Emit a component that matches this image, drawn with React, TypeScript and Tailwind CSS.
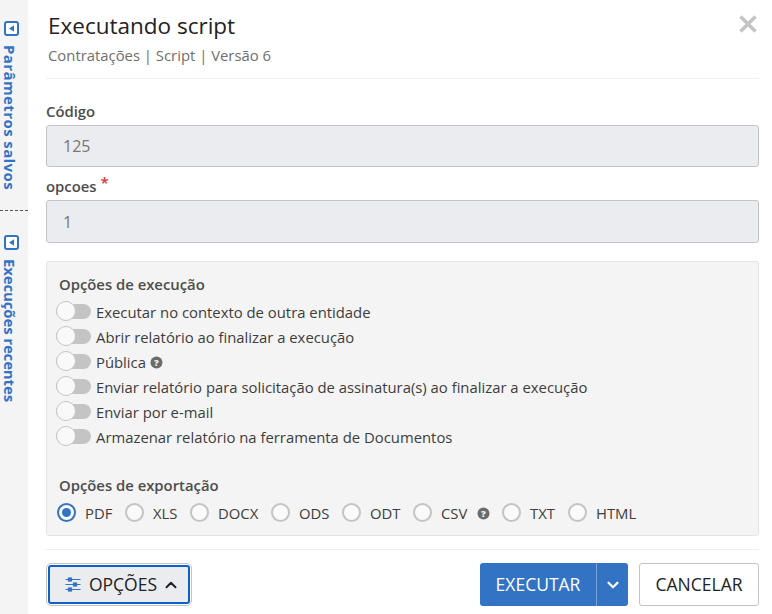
import React from "react";
import { ChevronDown, ChevronUp, X } from "lucide-react";

const SideTab = ({ label, className, tracking }: { label: string; className: string; tracking: string }) => {
  return (
    <div className={`flex flex-col items-start pl-[4px] ${className}`}>
      <svg width="15" height="15" viewBox="0 0 15 15" className="shrink-0">
        <rect x="1" y="1" width="13" height="13" rx="2" fill="#fff" stroke="#3373c4" strokeWidth="2" />
        <path d="M10 4.3v6.4L5 7.5z" fill="#3373c4" />
      </svg>
      <span className={`mt-[9px] ml-[-1px] [writing-mode:vertical-rl] text-[15px] leading-[14px] font-bold text-[#3373c4] whitespace-nowrap ${tracking}`}>
        {label}
      </span>
    </div>
  );
};

const Help = () => (
  <svg width="13" height="13" viewBox="0 0 13 13" className="shrink-0">
    <circle cx="6.5" cy="6.5" r="6" fill="#6b6b6b" />
    <text x="6.5" y="10" textAnchor="middle" fontSize="9.5" fontWeight="800" fill="#f4f4f4" fontFamily="Open Sans, sans-serif">
      ?
    </text>
  </svg>
);

const Toggle = ({ label, help }: { label: string; help?: boolean }) => (
  <div className="flex items-center h-[25px]">
    <div className="relative w-[35px] h-[15px] rounded-full bg-[#c4c4c4] ml-[-3px]">
      <div className="absolute left-0 top-[-3px] w-[20px] h-[20px] rounded-full bg-[#f9f9f9] border border-[#c6c6c6]" />
    </div>
    <span className="ml-[5px] mt-[2px] text-[14.85px] text-[#3d3d3d]">{label}</span>
    {help && (
      <span className="ml-[4px] mt-[2px]">
        <Help />
      </span>
    )}
  </div>
);

const Radio = ({ label, checked, help, width }: { label: string; checked?: boolean; help?: boolean; width: string }) => (
  <div className={`flex items-center ${width}`}>
    <div
      className={`w-[19px] h-[19px] rounded-full flex items-center justify-center shrink-0 bg-[#fafafa] border-2 ${
        checked ? "border-[#3373c4]" : "border-[#c4c4c4]"
      }`}
    >
      {checked && <div className="w-[9px] h-[9px] rounded-full bg-[#3373c4]" />}
    </div>
    <span className="ml-[9px] mt-[2px] text-[14.85px] text-[#3d3d3d]">{label}</span>
    {help && (
      <span className="ml-[10px] mt-[2px]">
        <Help />
      </span>
    )}
  </div>
);

const Field = ({ value, height }: { value: string; height: string }) => (
  <div className={`${height} mt-[4px] flex items-center px-[16px] bg-[#ebecef] border border-[#c4c4c4] rounded-[3px] text-[16px] text-[#777]`}>
    {value}
  </div>
);

const App = () => {
  return (
    <div className="flex w-[772px] h-[614px] overflow-hidden bg-white font-['Open_Sans',sans-serif]">
      <aside className="w-[28px] shrink-0 bg-[#f4f4f4] flex flex-col">
        <SideTab label="Parâmetros salvos" tracking="tracking-[0.4px]" className="pt-[21px] h-[210px]" />
        <div className="border-t border-dashed border-[#555]" />
        <SideTab label="Execuções recentes" tracking="tracking-[-0.15px]" className="pt-[24px]" />
      </aside>

      <main className="flex-1 pl-[18px] pr-[13px] flex flex-col">
        <header className="relative h-[79px] border-b border-[#f0f0f0] pl-[2px] pt-[9px]">
          <h1 className="text-[22.5px] leading-[34px] text-[#222]">Executando script</h1>
          <p className="text-[14.85px] leading-[22px] mt-[1px] text-[#6f6f6f]">Contratações | Script | Versão 6</p>
          <X className="absolute right-[-4px] top-[9px] text-[#c4c4c4]" size={30} strokeWidth={2.8} strokeLinecap="butt" />
        </header>

        <label className="mt-[22px] text-[14.85px] leading-[20px] font-semibold text-[#4d4d4d]">Código</label>
        <Field value="125" height="h-[42px]" />
        <label className="mt-[9px] text-[14.85px] leading-[20px] font-semibold text-[#4d4d4d]">
          opcoes <span className="relative top-[-4px] text-[#e03131]">*</span>
        </label>
        <Field value="1" height="h-[43px]" />

        <section className="mt-[18px] h-[275px] pl-[12px] pt-[12px] bg-[#f4f4f4] border border-[#e4e4e4] rounded-[3px]">
          <h2 className="text-[14.85px] leading-[20px] font-semibold text-[#4d4d4d] mb-[5px]">Opções de execução</h2>
          <Toggle label="Executar no contexto de outra entidade" />
          <Toggle label="Abrir relatório ao finalizar a execução" />
          <Toggle label="Pública" help />
          <Toggle label="Enviar relatório para solicitação de assinatura(s) ao finalizar a execução" />
          <Toggle label="Enviar por e-mail" />
          <Toggle label="Armazenar relatório na ferramenta de Documentos" />
          <h2 className="mt-[26px] text-[14.85px] leading-[20px] font-semibold text-[#4d4d4d]">Opções de exportação</h2>
          <div className="flex items-center mt-[5px] ml-[-2px]">
            <Radio label="PDF" checked width="w-[68px]" />
            <Radio label="XLS" width="w-[65px]" />
            <Radio label="DOCX" width="w-[81px]" />
            <Radio label="ODS" width="w-[71px]" />
            <Radio label="ODT" width="w-[71px]" />
            <Radio label="CSV" help width="w-[89px]" />
            <Radio label="TXT" width="w-[66px]" />
            <Radio label="HTML" width="w-[70px]" />
          </div>
        </section>

        <footer className="mt-[13px] pt-[13px] border-t border-[#f0f0f0] flex items-start justify-between">
          <button className="mt-[2px] ml-[2px] pl-[7px] h-[39px] w-[142px] flex items-center justify-center bg-[#ebecef] border-2 border-[#0b62c9] rounded-[3px] outline outline-1 outline-offset-1 outline-[#c4c4c4] text-[17.5px] text-[#222]">
            <svg width="16" height="15" viewBox="0 0 16 15" className="mr-[8px]" fill="none" stroke="#3373c4" strokeWidth="1.2">
              <path d="M0.5 2.5h15M0.5 7.5h15M0.5 12.5h15" />
              <rect x="3.5" y="1" width="3" height="3" fill="#3373c4" />
              <rect x="8.5" y="6" width="3" height="3" fill="#3373c4" />
              <rect x="3.5" y="11" width="3" height="3" fill="#3373c4" />
            </svg>
            OPÇÕES
            <ChevronUp className="ml-[5px]" size={18} strokeWidth={2.6} />
          </button>
          <div className="flex items-center">
            <div className="flex h-[43px] rounded-[3px] bg-[#3373c4] text-white text-[17.5px]">
              <button className="w-[117px] flex items-center justify-center border-r border-[#7aa3da]">EXECUTAR</button>
              <button className="w-[31px] flex items-center justify-center">
                <ChevronDown size={18} strokeWidth={3} />
              </button>
            </div>
            <button className="ml-[11px] w-[120px] h-[43px] bg-white border border-[#c4c4c4] rounded-[3px] text-[17.5px] text-[#222]">
              CANCELAR
            </button>
          </div>
        </footer>
      </main>
    </div>
  );
};

export default App;
